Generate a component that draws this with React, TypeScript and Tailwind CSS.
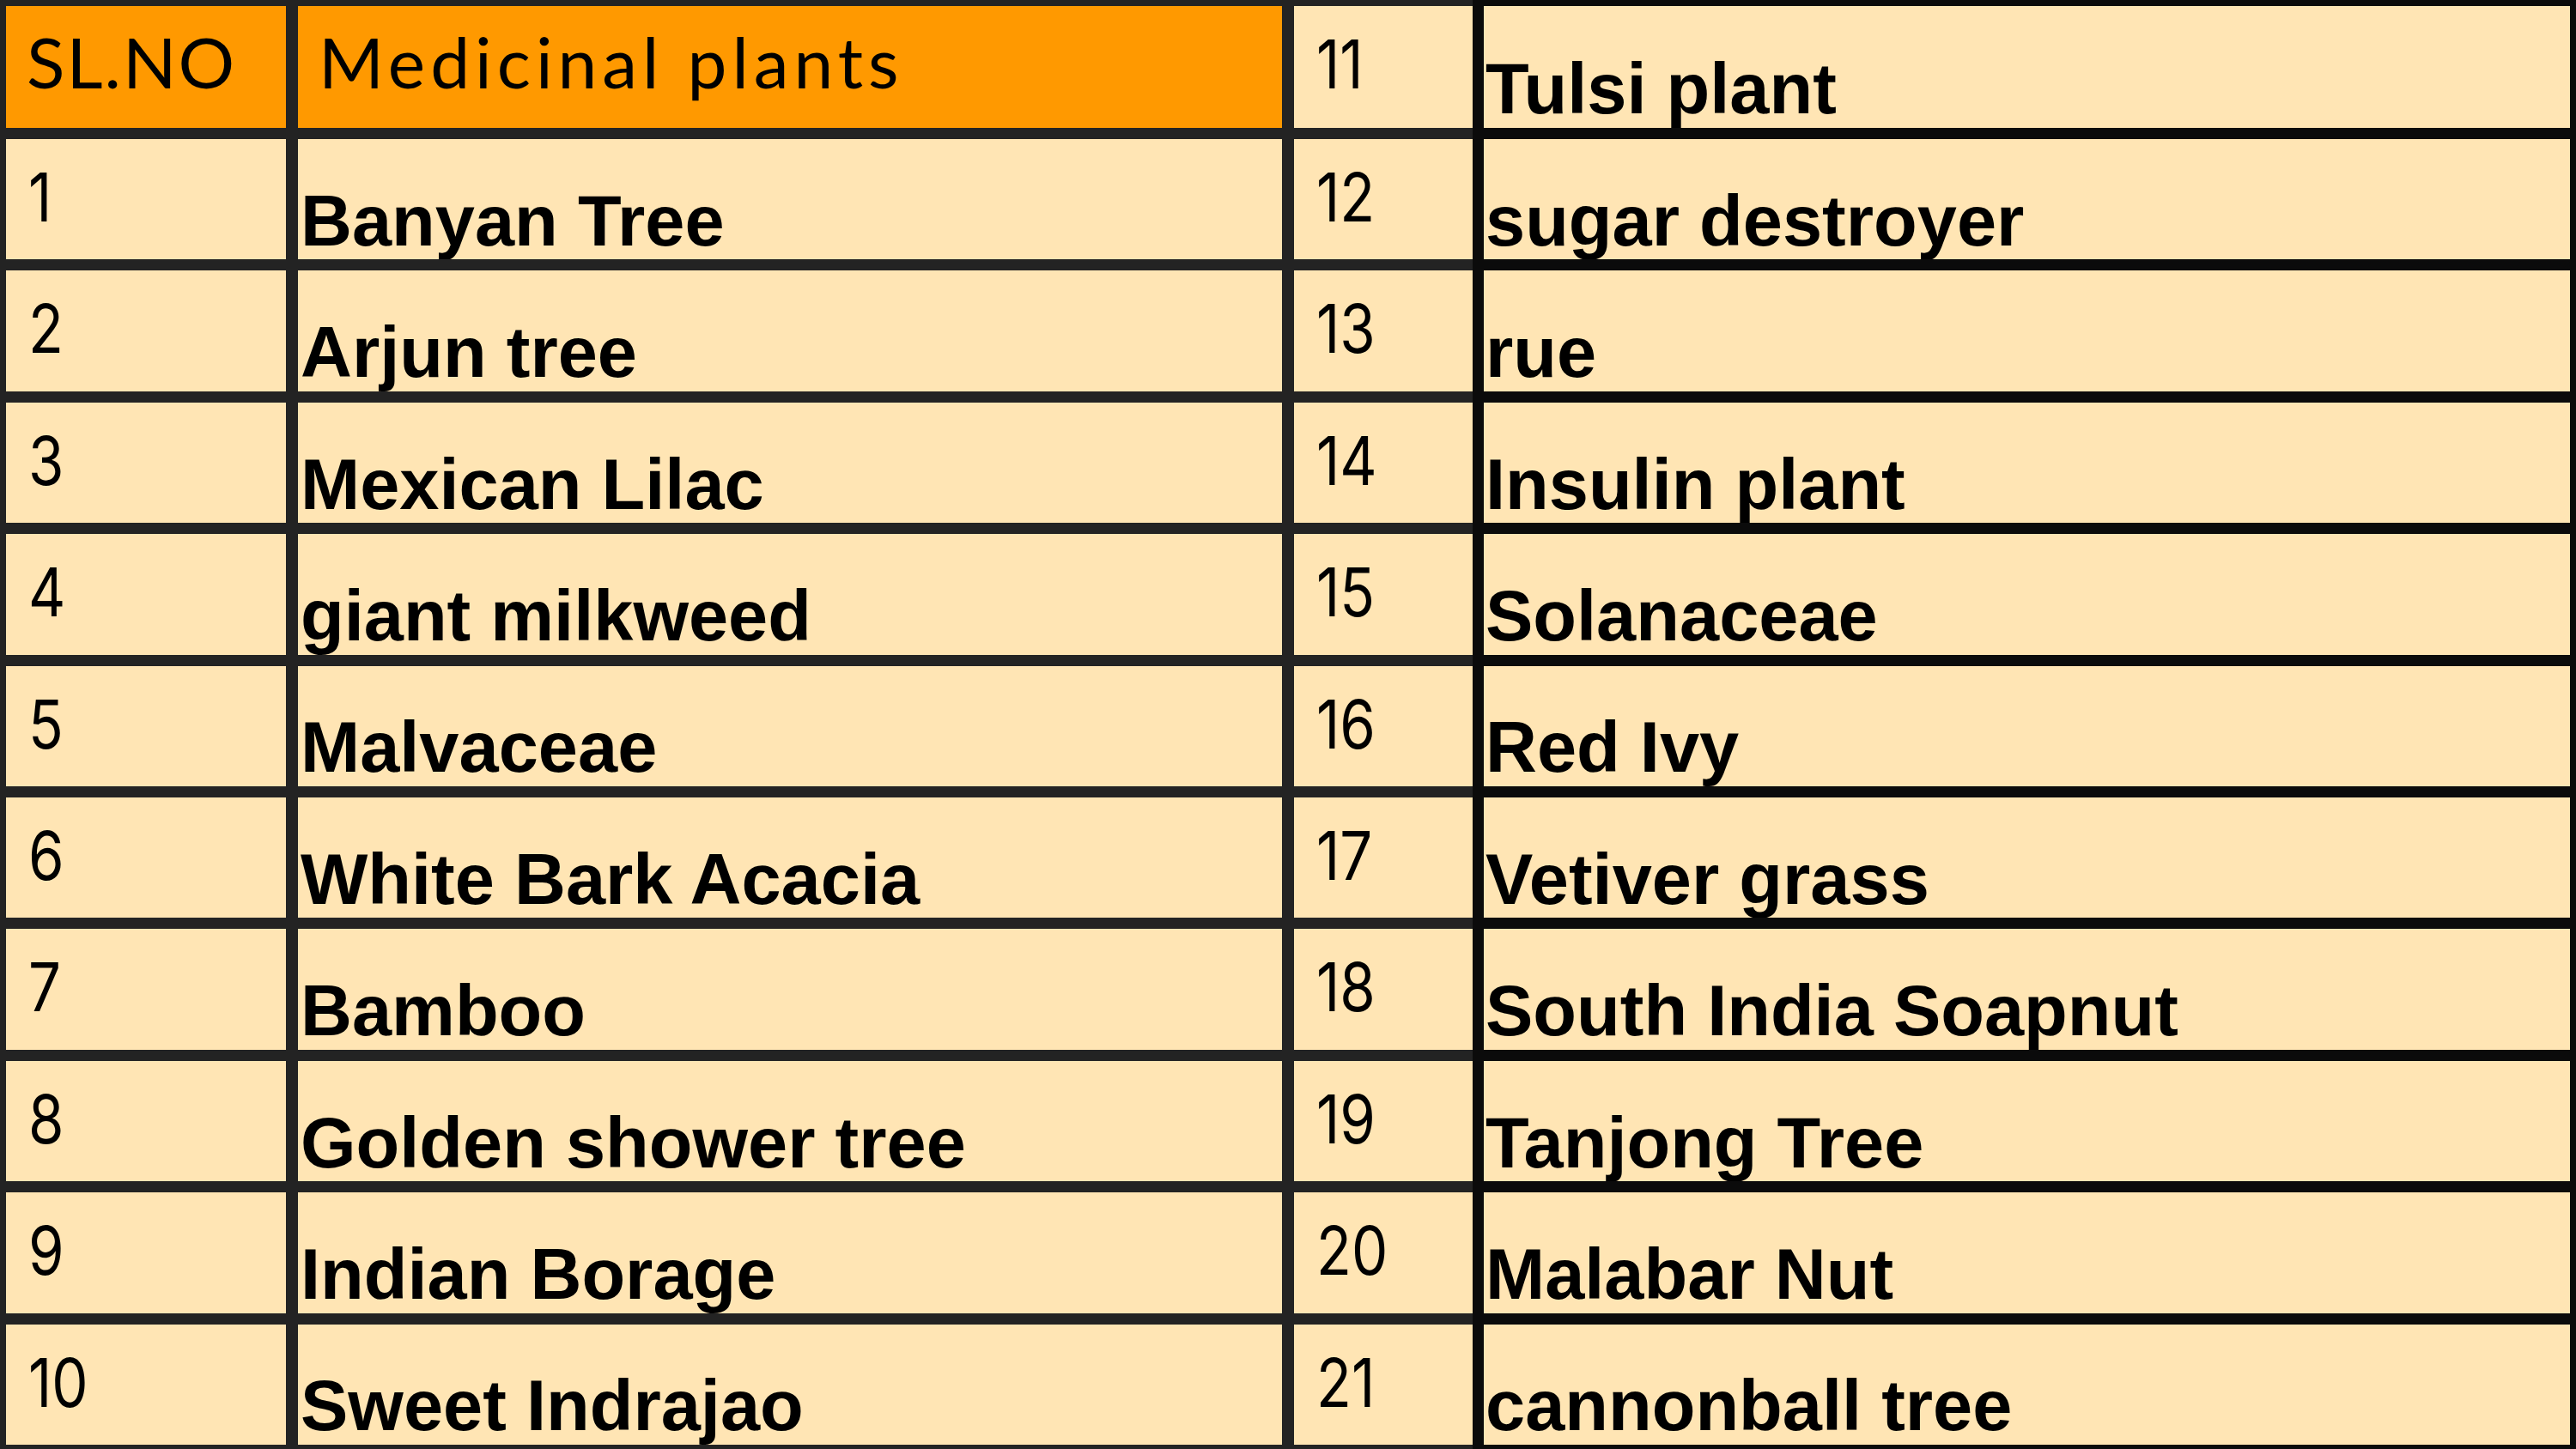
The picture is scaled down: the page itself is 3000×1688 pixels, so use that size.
import React from "react";

const leftRows = [
  ["1", "Banyan Tree", "12"],
  ["2", "Arjun tree", "13"],
  ["3", "Mexican Lilac", "14"],
  ["4", "giant milkweed", "15"],
  ["5", "Malvaceae", "16"],
  ["6", "White Bark Acacia", "17"],
  ["7", "Bamboo", "18"],
  ["8", "Golden shower tree", "19"],
  ["9", "Indian Borage", "20"],
  ["10", "Sweet Indrajao", "21"],
];

const rightNames = [
  "Tulsi plant",
  "sugar destroyer",
  "rue",
  "Insulin plant",
  "Solanaceae",
  "Red Ivy",
  "Vetiver grass",
  "South India Soapnut",
  "Tanjong Tree",
  "Malabar Nut",
  "cannonball tree",
];

// header labels (orange)
function HeadCell({ text, track }: { text: string; track: string }) {
  return (
    <div
      className={`flex items-start bg-[#ff9900] pl-[24px] pt-[23px] font-['Lato','Noto_Sans',sans-serif] text-[82px] font-normal leading-none text-black ${track}`}
    >
      {text}
    </div>
  );
}

// serial numbers: narrow light digits
function NumCell({ text }: { text: string }) {
  return (
    <div className="flex items-start bg-[#ffe5b4] pl-[26px] pt-[29px] font-['Inter','Lato',sans-serif] text-[78px] font-normal leading-none text-black">
      <span className="inline-block origin-left scale-x-[0.86]">{text}</span>
    </div>
  );
}

// bold plant names, sat on the bottom edge of the cell
function NameCell({ text, pad = "pl-[3px]" }: { text: string; pad?: string }) {
  return (
    <div
      className={`flex items-end overflow-hidden whitespace-nowrap bg-[#ffe5b4] ${pad} font-['Liberation_Sans','Arial',sans-serif] text-[83px] font-bold leading-[1.08] text-black`}
    >
      {text}
    </div>
  );
}

export default function App() {
  return (
    <div className="flex h-[1688px] w-[3000px] overflow-hidden">
      {/* left block: SL.NO / name / next serial */}
      <div className="grid h-full w-[1715px] shrink-0 grid-cols-[326px_1146px_208px] grid-rows-[142px_repeat(10,minmax(0,1fr))] gap-x-[14px] gap-y-[13px] bg-[#232323] pb-[5px] pl-[7px] pt-[7px]">
        <HeadCell text="SL.NO" track="tracking-[2px]" />
        <HeadCell text="Medicinal plants" track="tracking-[6px]" />
        <NumCell text="11" />
        {leftRows.map(([n, name, m]) => (
          <React.Fragment key={n}>
            <NumCell text={n} />
            <NameCell text={name} />
            <NumCell text={m} />
          </React.Fragment>
        ))}
      </div>

      {/* right block: names 11-21, black rules */}
      <div className="grid h-full flex-1 grid-rows-[142px_repeat(10,minmax(0,1fr))] gap-y-[13px] bg-[#0b0b0b] pb-[5px] pl-[13px] pr-[7px] pt-[7px]">
        {rightNames.map((name) => (
          <NameCell key={name} text={name} pad="pl-[2px]" />
        ))}
      </div>
    </div>
  );
}
